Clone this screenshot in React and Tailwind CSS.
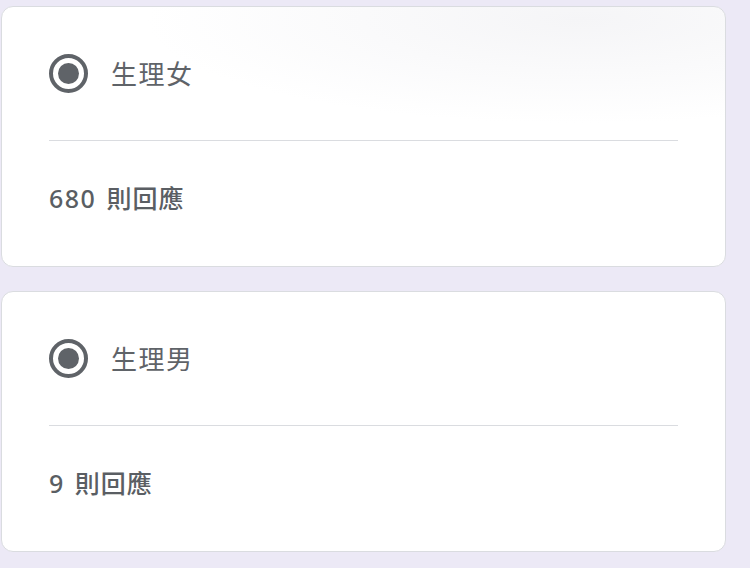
function Radio() {
  return (
    <span className="flex h-[39px] w-[39px] shrink-0 items-center justify-center rounded-full border-[4px] border-[#5f6368]">
      <span className="h-[21px] w-[21px] rounded-full bg-[#5f6368]" />
    </span>
  );
}

function OptionCard({ label, count, shaded }) {
  return (
    <div
      className={`w-[725px] rounded-[12px] border-[1.5px] border-[#dadce0] bg-white px-[47px] pt-[47px] pb-[52px] ${
        shaded ? "bg-[radial-gradient(ellipse_60%_40%_at_80%_5%,#f5f5f7_0%,#ffffff_100%)]" : ""
      }`}
    >
      {/* Option label */}
      <div className="flex h-[39px] items-center gap-[23px]">
        <Radio />
        <span className="text-[26px] leading-none tracking-[1.5px] text-[#5f6368]">{label}</span>
      </div>

      <div className="mt-[47px] h-px bg-[#dadce0]" />

      {/* Response count */}
      <div className="mt-[41px] flex items-center gap-[10px] text-[25px] font-medium leading-[32px] text-[#5a5e63]">
        <span className="tracking-[1.5px]">{count}</span>
        <span className="tracking-[1px]">則回應</span>
      </div>
    </div>
  );
}

export default function App() {
  return (
    <div
      className="flex h-[568px] w-[750px] flex-col gap-[24px] bg-[#ece9f6] pt-[6px] pl-px"
      style={{ fontFamily: '"Noto Sans", "Noto Sans CJK TC", sans-serif' }}
    >
      <OptionCard label="生理女" count="680" shaded />
      <OptionCard label="生理男" count="9" />
    </div>
  );
}
